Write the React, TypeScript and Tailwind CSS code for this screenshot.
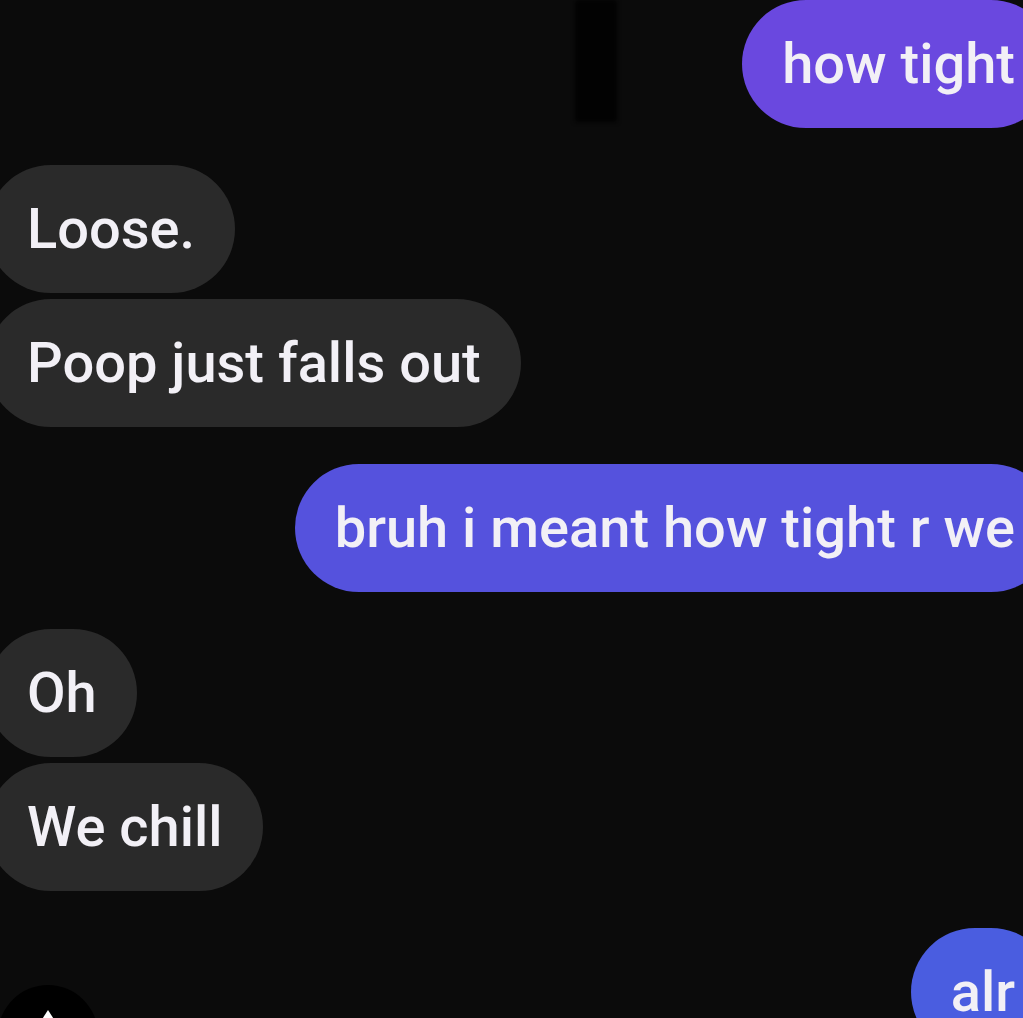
import React from "react";

type Msg = { text: string; mine: boolean; gapTop: number; color?: string };

const messages: Msg[] = [
  { text: "how tight", mine: true, gapTop: 0, color: "bg-[#6a48df]" },
  { text: "Loose.", mine: false, gapTop: 37 },
  { text: "Poop just falls out", mine: false, gapTop: 6 },
  { text: "bruh i meant how tight r we", mine: true, gapTop: 37, color: "bg-[#5552dd]" },
  { text: "Oh", mine: false, gapTop: 37 },
  { text: "We chill", mine: false, gapTop: 6 },
  { text: "alr", mine: true, gapTop: 37, color: "bg-[#4a5de0]" },
];

const gapClass: Record<number, string> = {
  0: "mt-0",
  6: "mt-[6px]",
  37: "mt-[37px]",
};

const Bubble: React.FC<{ msg: Msg }> = ({ msg }) => (
  <div
    className={`flex ${msg.mine ? "justify-end -mr-[32px]" : "justify-start -ml-[13px]"} ${gapClass[msg.gapTop]}`}
  >
    <div
      className={`h-[128px] flex items-center rounded-full px-[40px] whitespace-nowrap text-[56px] font-medium leading-[48px] text-[#f2f0f6] ${
        msg.mine ? msg.color : "bg-[#2a2a2a]"
      }`}
    >
      {msg.text}
    </div>
  </div>
);

export default function App() {
  return (
    <div
      className="relative w-[1023px] h-[1018px] overflow-hidden bg-[#0b0b0b]"
      style={{ fontFamily: "Roboto, 'Liberation Sans', sans-serif" }}
    >
      <div className="flex flex-col">
        {messages.map((m, i) => (
          <Bubble key={i} msg={m} />
        ))}
      </div>

      {/* dark smear near the top */}
      <div className="absolute left-[575px] top-0 w-[42px] h-[122px] bg-[#020202] blur-[2px]" />

      {/* avatar badge at bottom left */}
      <div className="absolute left-[-2px] top-[985px] w-[100px] h-[100px] rounded-full bg-black flex justify-center">
        <div className="mt-[25px] w-0 h-0 border-l-[9px] border-r-[9px] border-b-[14px] border-l-transparent border-r-transparent border-b-white" />
      </div>
    </div>
  );
}
